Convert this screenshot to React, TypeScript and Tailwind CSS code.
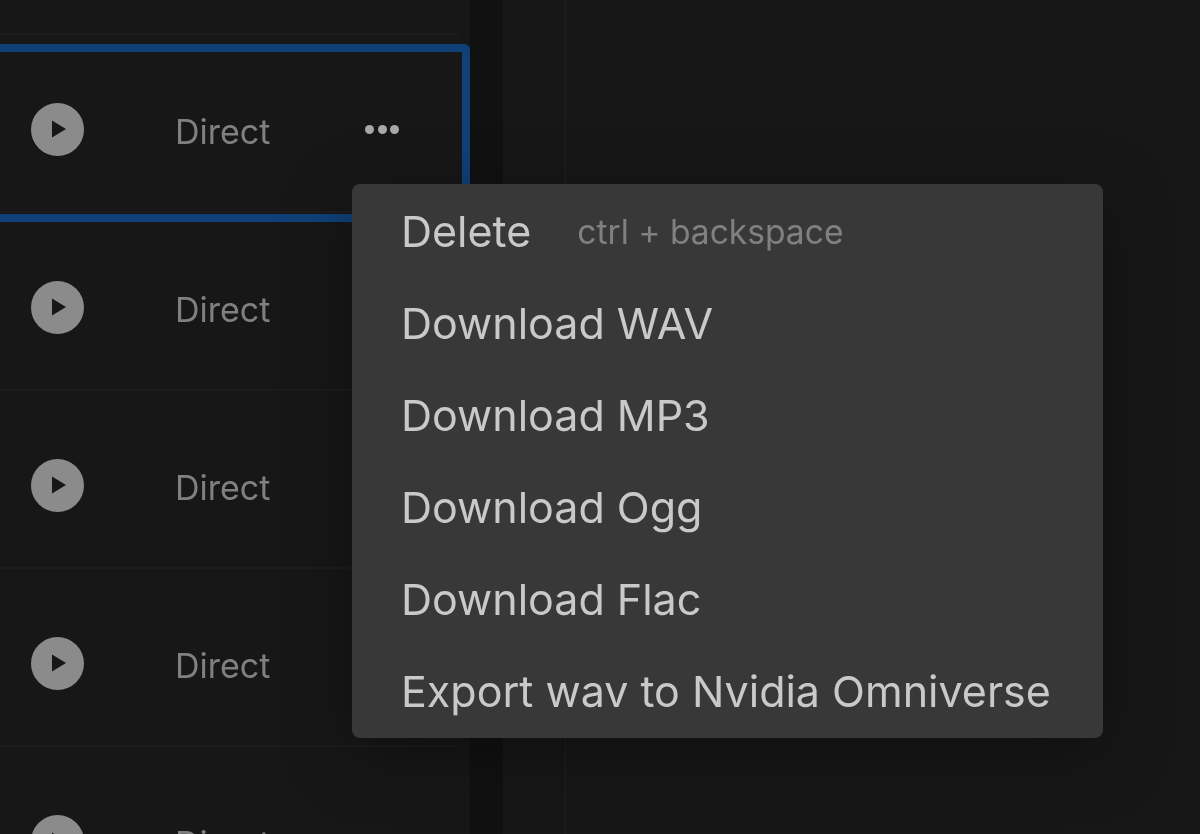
import React from "react";

const rows = [0, 1, 2, 3, 4];

const menuItems = [
  "Download WAV",
  "Download MP3",
  "Download Ogg",
  "Download Flac",
  "Export wav to Nvidia Omniverse",
];

const PlayButton: React.FC = () => (
  <div className="flex h-[53px] w-[53px] shrink-0 items-center justify-center rounded-full bg-[#8b8b8b]">
    <svg width="14" height="18" viewBox="0 0 14 18" className="ml-[2px]">
      <path d="M0 0.5 L14 9 L0 17.5 Z" fill="#171717" />
    </svg>
  </div>
);

const Row: React.FC<{ selected: boolean }> = ({ selected }) => (
  <div className="relative h-[178px] shrink-0 border-b-2 border-[#1c1c1c] pt-[12px]">
    <div className="flex h-full items-center pl-[31px]">
      <PlayButton />
      <span className="mt-[6px] ml-[91px] text-[34px] leading-none text-[#808080]">Direct</span>
      {selected && (
        <div className="ml-[95px] flex items-center gap-[3.5px]">
          <span className="h-[9px] w-[9px] rounded-full bg-[#a8a8a8]" />
          <span className="h-[9px] w-[9px] rounded-full bg-[#a8a8a8]" />
          <span className="h-[9px] w-[9px] rounded-full bg-[#a8a8a8]" />
        </div>
      )}
    </div>
    {selected && (
      <div className="absolute top-[9px] -right-[11px] -left-[12px] h-[178px] rounded-[6px] border-[8px] border-[#0f4178]" />
    )}
  </div>
);

export default function App() {
  return (
    <div className="relative flex h-[834px] w-[1200px] overflow-hidden bg-[#171717] font-['Inter',sans-serif] blur-[0.4px]">
      <div className="w-[470px] shrink-0 pr-[11px]">
        <div className="h-[35px] border-b-2 border-[#1c1c1c]" />
        {rows.map((r) => (
          <Row key={r} selected={r === 0} />
        ))}
      </div>
      <div className="w-[33px] shrink-0 bg-[#111111]" />
      <div className="w-[63px] shrink-0 border-r border-[#1f1f1f]" />
      <div className="flex-1" />

      <div className="absolute top-[184px] left-[352px] w-[751px] rounded-[8px] bg-[#383838] pb-[1px] pt-[1px] pl-[49px] shadow-[0_16px_70px_rgba(0,0,0,0.35)]">
        <div className="flex h-[92px] items-center">
          <span className="text-[43px] text-[#c9c9c9]">Delete</span>
          <span className="mt-[2px] ml-[46px] text-[33.6px] text-[#808080]">ctrl + backspace</span>
        </div>
        {menuItems.map((item) => (
          <div key={item} className="flex h-[92px] items-center text-[43px] text-[#c9c9c9]">
            {item}
          </div>
        ))}
      </div>
    </div>
  );
}
